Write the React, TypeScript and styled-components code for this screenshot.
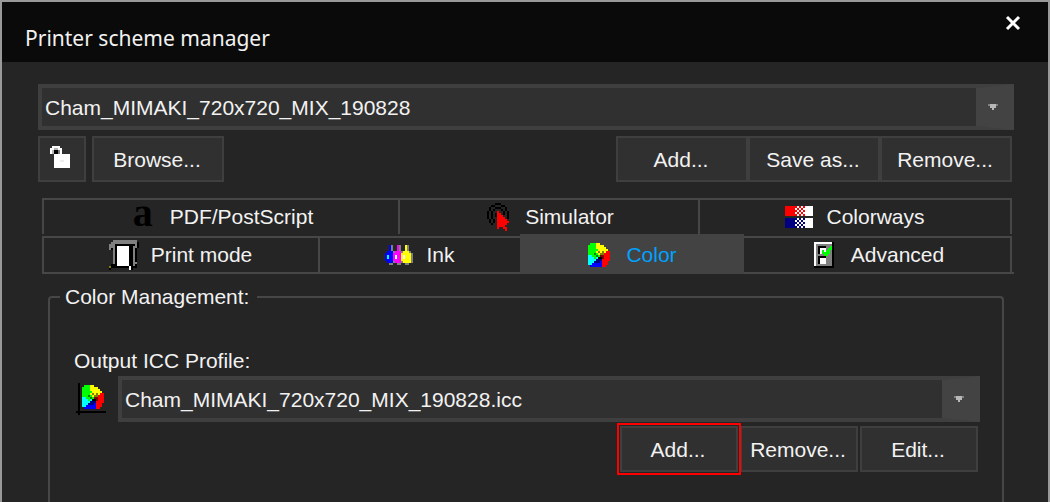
import React, { useState } from "react";
import styled, { createGlobalStyle, css } from "styled-components";

const color = {
  frame: "#999999",
  title: "#0a0a0a",
  page: "#252525",
  field: "#303030",
  edge: "#3f3f3f",
  raised: "#434343",
  line: "#474747",
  text: "#f2f2f2",
  accent: "#00a2ff",
  alert: "#ff0000",
};

const GlobalStyle = createGlobalStyle`
  *, *::before, *::after { box-sizing: border-box; }
  body {
    margin: 0;
    background: ${color.page};
    color: ${color.text};
    font: 21px/24px "Liberation Sans", Arial, sans-serif;
  }
  button, select { font: inherit; color: inherit; }
`;

/* ---------- pixel icons ---------- */

const palette: Record<string, string> = {
  K: "#000000",
  W: "#ffffff",
  G: "#808080",
  S: "#b8b8b8",
  O: "#808000",
  R: "#ff0000",
  D: "#800000",
  Y: "#ffff00",
  L: "#00ff00",
  E: "#008000",
  C: "#00ffff",
  B: "#0000ff",
  N: "#000080",
  M: "#ff00ff",
  F: "#eeeeee",
};

const printerArt = [
  "..GGGGGGGGGGGG.",
  ".GGGGGGGGGGGGGK",
  "GGGKKKKKKKKKKGK",
  "GGGKWWWWWWKKGGK",
  "GKGKWWWWWWKKGK.",
  "..GKWWWWWWKKGK.",
  "..GKWWWWWWKKGK.",
  "..GKWWWWWWKKGK.",
  "..GKWWWWWWKKGK.",
  "..GKWWWWWWKKGK.",
  "..GKWWWWWWKKGK.",
  "..GKWWWWWWKKGG.",
  ".KKKWWWWWWKKGK.",
  "OKKKKKKKKKWKKK.",
  "K.........WK...",
];

const inkArt = [
  "..BG..MG..YG..",
  "..BG..MG..YG..",
  "..BG..MG..YG..",
  ".BBBGMMMGYYYG.",
  "BBBBMMMMYYYYYG",
  "BCBBMWMMYWYYYG",
  "BCBBMWMMYWYYYG",
  "BBBBMMMMYYYYYG",
  ".BBBGMMMGYYYYG",
  "..GG..GG..GG..",
];

const wheelArt = [
  ".LLLYY.....",
  "LLLLYYYY...",
  "LLLLYYYYY..",
  "LLLLLYYYYY.",
  "LLLLYOYOYRR",
  "LLLELYOORRR",
  "CCLLELDDRRR",
  "CCCLCKKDRRR",
  "CCCCNNNRRRR",
  "CCCNNNBRRR.",
  "CCBBBBBRRR.",
  ".BBBBBBRR..",
];

const wheelAxesArt = [
  ".K.............",
  ...wheelArt.map((row) => ".K." + row + "."),
  ".K.............",
  "KKKKKKKKKKKKKKK",
  ".K.............",
];

const cursorArt = [
  "....KKK....",
  "..KK...KK..",
  ".K..KKK..K.",
  ".K.K...K.K.",
  "K.K..R..K.K",
  "K.K.KRR.K.K",
  "K.K.KRRR..K",
  "K.K..RRRR.K",
  ".K.K.RRRRR.",
  ".K.K.RRRRRR",
  "..K..RRRRR.",
  ".....RRRR..",
  ".....R..RR.",
  ".........R.",
];

const swatchArt = [
  "RRRRRRWRWRWWWW",
  "RRRRRWRWRWWWWW",
  "RRRRRRWRWRWWWW",
  "RRRRRWRWRWWWWW",
  "RRRRRRWRWRWWWW",
  "..............",
  "NNNNNNWNWNWWWW",
  "NNNNNWNWNWWWWW",
  "NNNNNNWNWNWWWW",
  "NNNNNWNWNWWWWW",
  "NNNNNNWNWNWWWW",
];

const checklistArt = [
  "WWWWWWWWWK",
  "WGGGGGGGGK",
  "WGKKKKGGLK",
  "WGKWWWGLLK",
  "WGKWLWLLGK",
  "WGKWLLLLGK",
  "WGGGGLLGGK",
  "WGKKKKGGGK",
  "WGKWWWGGGK",
  "WGKWWWGGGK",
  "WGKWWWGGGK",
  "WGGGGGGGGK",
  "KKKKKKKKKK",
];

const lockArt = [
  ".WWWW.....",
  "WWSSWW....",
  "WSKKGW....",
  "WSKKGW....",
  "..WWWWWWWW",
  "..WWWWWWWW",
  "..WWWWWWWW",
  "..WWWFFWWW",
  "..WWWWWWWW",
  "..WWWWWWWW",
  "..WWWWWWWW",
];

const arrowArt = ["GSSSG", ".SSS.", "..S.."];

const Svg = styled.svg`
  display: block;
  flex: none;
`;

function PixelIcon({ art }: { art: string[] }) {
  const cols = art[0].length;
  return (
    <Svg
      width={cols * 2}
      height={art.length * 2}
      viewBox={`0 0 ${cols} ${art.length}`}
      shapeRendering="crispEdges"
      aria-hidden="true"
    >
      {art.flatMap((row, y) =>
        [...row].map((key, x) =>
          palette[key] ? (
            <rect key={`${x}-${y}`} x={x} y={y} width="1" height="1" fill={palette[key]} />
          ) : null
        )
      )}
    </Svg>
  );
}

/* ---------- window ---------- */

const Window = styled.div`
  display: flex;
  flex-direction: column;
  min-height: 100vh;
  border: 2px solid ${color.frame};
  border-bottom: 0;
`;

const TitleBar = styled.header`
  display: flex;
  justify-content: space-between;
  align-items: flex-start;
  height: 60px;
  padding: 0 20px 0 23px;
  background: ${color.title};
`;

const Title = styled.h1`
  margin: 0;
  padding-top: 24px;
  font: 400 21px/24px "Noto Sans", "Segoe UI", sans-serif;
`;

const CloseButton = styled.button`
  display: flex;
  padding: 6px;
  margin-top: 6px;
  border: 0;
  background: none;
`;

const Content = styled.main`
  flex: 1;
  display: flex;
  flex-direction: column;
  padding: 22px 34px 0 36px;
`;

/* ---------- controls ---------- */

const ComboFrame = styled.div`
  position: relative;
  flex: 1;
`;

const ComboSelect = styled.select`
  appearance: none;
  display: block;
  width: 100%;
  height: 46px;
  padding: 2px 3px 0;
  border: 4px solid ${color.edge};
  border-right: 38px solid ${color.raised};
  border-radius: 0;
  background: ${color.field};
`;

const ComboArrow = styled.span`
  position: absolute;
  top: 20px;
  right: 16px;
  pointer-events: none;
`;

type ComboProps = { id: string; value: string; label?: string };

function Combo({ id, value, label }: ComboProps) {
  return (
    <ComboFrame>
      <ComboSelect id={id} aria-label={label} defaultValue={value}>
        <option>{value}</option>
      </ComboSelect>
      <ComboArrow>
        <PixelIcon art={arrowArt} />
      </ComboArrow>
    </ComboFrame>
  );
}

const Button = styled.button<{ $width: number; $highlighted?: boolean }>`
  display: flex;
  align-items: center;
  justify-content: center;
  width: ${(p) => p.$width}px;
  height: 46px;
  padding: 2px 2px 0 0;
  border: 2px solid ${color.edge};
  background: ${color.field};
  ${(p) =>
    p.$highlighted &&
    css`
      z-index: 1;
      outline: 2px solid ${color.alert};
      outline-offset: 1px;
    `}
`;

const LockButton = styled(Button)`
  padding: 0 4px 4px 0;
`;

const Toolbar = styled.div`
  display: flex;
  justify-content: space-between;
  margin-top: 6px;
  padding-right: 2px;
`;

const ButtonGroup = styled.div<{ $gap: number }>`
  display: flex;
  gap: ${(p) => p.$gap}px;
`;

/* ---------- tabs ---------- */

const Tabs = styled.div`
  display: flex;
  flex-direction: column;
  gap: 2px;
  margin: 16px 0 0 4px;
  border-bottom: 2px solid ${color.line};
`;

const TabRow = styled.div<{ $columns: string }>`
  display: grid;
  grid-template-columns: ${(p) => p.$columns};
  height: 36px;
  margin-right: 2px;
  border-top: 2px solid ${color.line};
  border-left: 2px solid ${color.line};
`;

const Tab = styled.button<{ $active: boolean }>`
  display: flex;
  align-items: center;
  justify-content: center;
  gap: 13px;
  padding: 0;
  border: 0;
  border-right: 2px solid ${color.line};
  background: none;
  ${(p) =>
    p.$active &&
    css`
      margin: -4px 0 -2px -2px;
      padding: 2px 0 0;
      border-color: ${color.raised};
      background: ${color.raised};
      color: ${color.accent};
    `}
`;

const TabIcon = styled.span`
  display: flex;
  justify-content: center;
  width: 28px;
`;

const LetterIcon = styled.span`
  color: #000000;
  font: 700 40px/24px "Liberation Serif", "Times New Roman", serif;
  padding-bottom: 8px;
`;

const tabRows = [
  {
    columns: "356fr 300fr 312fr",
    tabs: [
      { name: "PDF/PostScript", icon: <LetterIcon aria-hidden="true">a</LetterIcon> },
      { name: "Simulator", icon: <PixelIcon art={cursorArt} /> },
      { name: "Colorways", icon: <PixelIcon art={swatchArt} /> },
    ],
  },
  {
    columns: "276fr 202fr 222fr 268fr",
    tabs: [
      { name: "Print mode", icon: <PixelIcon art={printerArt} /> },
      { name: "Ink", icon: <PixelIcon art={inkArt} /> },
      { name: "Color", icon: <PixelIcon art={wheelArt} /> },
      { name: "Advanced", icon: <PixelIcon art={checklistArt} /> },
    ],
  },
];

/* ---------- color management ---------- */

const Group = styled.fieldset`
  flex: 1;
  min-width: 0;
  margin: 11px 10px 0;
  padding: 40px 22px 30px 24px;
  border: 2px solid ${color.line};
  border-bottom: 0;
  border-radius: 4px 4px 0 0;
`;

const Legend = styled.legend`
  margin-left: -14px;
  padding: 0 8px 0 5px;
`;

const FieldLabel = styled.label`
  display: block;
`;

const ProfileRow = styled.div`
  display: flex;
  align-items: center;
  gap: 12px;
  margin-top: 3px;
  padding-left: 2px;
`;

const ProfileActions = styled.div`
  display: flex;
  justify-content: flex-end;
  gap: 2px;
  margin-top: 4px;
  padding-right: 2px;
`;

export default function App() {
  const [active, setActive] = useState("Color");
  return (
    <>
      <GlobalStyle />
      <Window>
        <TitleBar>
          <Title>Printer scheme manager</Title>
          <CloseButton type="button" aria-label="Close">
            <Svg width="18" height="18" viewBox="0 0 18 18" aria-hidden="true">
              <path d="M3 3 L15 15 M15 3 L3 15" stroke="#ffffff" strokeWidth="3" />
            </Svg>
          </CloseButton>
        </TitleBar>
        <Content>
          <Combo id="scheme" label="Printer scheme" value="Cham_MIMAKI_720x720_MIX_190828" />
          <Toolbar>
            <ButtonGroup $gap={6}>
              <LockButton type="button" $width={48} aria-label="Unlock">
                <PixelIcon art={lockArt} />
              </LockButton>
              <Button type="button" $width={132}>Browse...</Button>
            </ButtonGroup>
            <ButtonGroup $gap={0}>
              <Button type="button" $width={132}>Add...</Button>
              <Button type="button" $width={132}>Save as...</Button>
              <Button type="button" $width={132}>Remove...</Button>
            </ButtonGroup>
          </Toolbar>
          <Tabs role="tablist" aria-label="Scheme settings">
            {tabRows.map((row) => (
              <TabRow key={row.columns} role="presentation" $columns={row.columns}>
                {row.tabs.map((tab) => (
                  <Tab
                    key={tab.name}
                    type="button"
                    role="tab"
                    aria-selected={tab.name === active}
                    $active={tab.name === active}
                    onClick={() => setActive(tab.name)}
                  >
                    <TabIcon>{tab.icon}</TabIcon>
                    {tab.name}
                  </Tab>
                ))}
              </TabRow>
            ))}
          </Tabs>
          <Group>
            <Legend>Color Management:</Legend>
            <FieldLabel htmlFor="profile">Output ICC Profile:</FieldLabel>
            <ProfileRow>
              <PixelIcon art={wheelAxesArt} />
              <Combo id="profile" value="Cham_MIMAKI_720x720_MIX_190828.icc" />
            </ProfileRow>
            <ProfileActions>
              <Button type="button" $width={118} $highlighted>Add...</Button>
              <Button type="button" $width={118}>Remove...</Button>
              <Button type="button" $width={118}>Edit...</Button>
            </ProfileActions>
          </Group>
        </Content>
      </Window>
    </>
  );
}
